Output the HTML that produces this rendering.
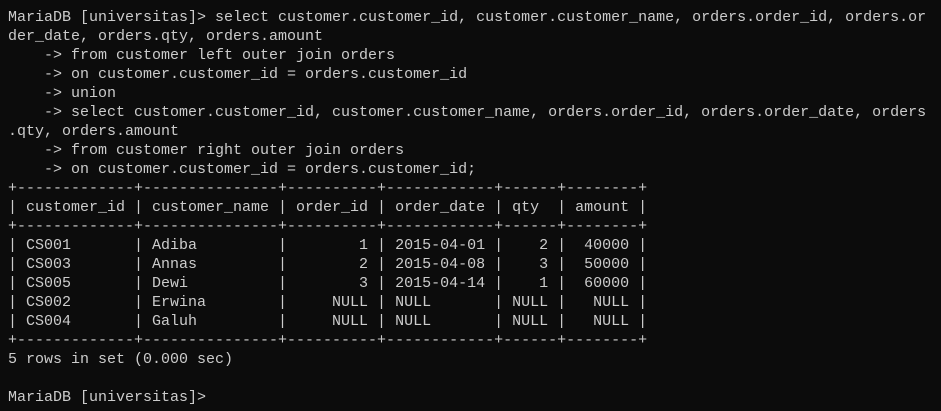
<!DOCTYPE html>
<html><head><meta charset="utf-8"><style>
html,body{margin:0;padding:0;background:#0c0c0c;width:941px;height:411px;overflow:hidden}
pre{margin:0;position:absolute;left:8px;top:8px;font-family:"Liberation Mono","DejaVu Sans Mono",monospace;font-size:15px;line-height:19px;color:#cccccc;white-space:pre}
</style></head><body><pre>MariaDB [universitas]&gt; select customer.customer_id, customer.customer_name, orders.order_id, orders.or
der_date, orders.qty, orders.amount
    -&gt; from customer left outer join orders
    -&gt; on customer.customer_id = orders.customer_id
    -&gt; union
    -&gt; select customer.customer_id, customer.customer_name, orders.order_id, orders.order_date, orders
.qty, orders.amount
    -&gt; from customer right outer join orders
    -&gt; on customer.customer_id = orders.customer_id;
+-------------+---------------+----------+------------+------+--------+
| customer_id | customer_name | order_id | order_date | qty  | amount |
+-------------+---------------+----------+------------+------+--------+
| CS001       | Adiba         |        1 | 2015-04-01 |    2 |  40000 |
| CS003       | Annas         |        2 | 2015-04-08 |    3 |  50000 |
| CS005       | Dewi          |        3 | 2015-04-14 |    1 |  60000 |
| CS002       | Erwina        |     NULL | NULL       | NULL |   NULL |
| CS004       | Galuh         |     NULL | NULL       | NULL |   NULL |
+-------------+---------------+----------+------------+------+--------+
5 rows in set (0.000 sec)

MariaDB [universitas]&gt;</pre></body></html>
